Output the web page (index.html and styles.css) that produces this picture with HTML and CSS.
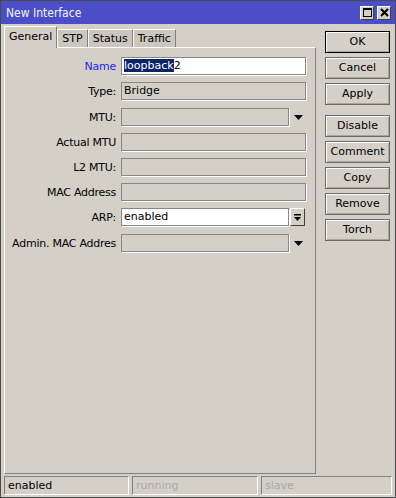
FILE: index.html
```html
<!DOCTYPE html>
<html>
<head>
<meta charset="utf-8">
<link rel="stylesheet" href="styles.css">
</head>
<body>
<div class="window">
  <div class="titlebar">
    <span class="title">New Interface</span>
    <div class="tb-buttons">
      <span class="tbb"><svg width="9" height="9" viewBox="0 0 9 9"><rect x="0.5" y="0.5" width="8" height="8" fill="none" stroke="#000"/><rect x="0" y="0" width="9" height="2" fill="#000"/></svg></span>
      <span class="tbb"><svg width="9" height="9" viewBox="0 0 9 9"><path d="M1 1 L8 8 M8 1 L1 8" stroke="#000" stroke-width="2"/></svg></span>
    </div>
  </div>
  <div class="main">
    <div class="left">
      <div class="tabs">
        <span class="tab active">General</span>
        <span class="tab">STP</span>
        <span class="tab">Status</span>
        <span class="tab">Traffic</span>
      </div>
      <div class="panel">
        <div class="form">
          <div class="row">
            <span class="label focus">Name</span>
            <span class="field white"><span class="sel">loopback</span>2</span>
          </div>
          <div class="row">
            <span class="label">Type:</span>
            <span class="field">Bridge</span>
          </div>
          <div class="row extra">
            <span class="label">MTU:</span>
            <span class="field short"></span>
            <span class="arrow"><svg width="9" height="5" viewBox="0 0 9 5"><path d="M0 0 H9 L4.5 5 Z" fill="#000"/></svg></span>
          </div>
          <div class="row">
            <span class="label">Actual MTU</span>
            <span class="field"></span>
          </div>
          <div class="row">
            <span class="label">L2 MTU:</span>
            <span class="field"></span>
          </div>
          <div class="row">
            <span class="label">MAC Address</span>
            <span class="field"></span>
          </div>
          <div class="row">
            <span class="label">ARP:</span>
            <span class="field short white">enabled</span>
            <span class="dd-btn"><svg width="7" height="7" viewBox="0 0 7 7"><rect x="0" y="0" width="7" height="1.5" fill="#000"/><path d="M0 3 H7 L3.5 7 Z" fill="#000"/></svg></span>
          </div>
          <div class="row extra">
            <span class="label">Admin. MAC Addres</span>
            <span class="field short"></span>
            <span class="arrow"><svg width="9" height="5" viewBox="0 0 9 5"><path d="M0 0 H9 L4.5 5 Z" fill="#000"/></svg></span>
          </div>
        </div>
      </div>
    </div>
    <div class="buttons">
      <span class="btn default">OK</span>
      <span class="btn">Cancel</span>
      <span class="btn">Apply</span>
      <span class="btn sep">Disable</span>
      <span class="btn">Comment</span>
      <span class="btn">Copy</span>
      <span class="btn">Remove</span>
      <span class="btn">Torch</span>
    </div>
  </div>
  <div class="status">
    <span class="sb sb1">enabled</span>
    <span class="sb sb2 dim">running</span>
    <span class="sb sb3 dim">slave</span>
  </div>
</div>
</body>
</html>
```

FILE: styles.css
```css
* { box-sizing: border-box; }
html, body { margin: 0; padding: 0; background: #d4d0c8; }
body {
  font-family: "DejaVu Sans", sans-serif;
  font-size: 11px;
  color: #000;
}
.window {
  width: 396px;
  height: 498px;
  border: 1px solid #4a4a4a;
  display: flex;
  flex-direction: column;
  background: #d4d0c8;
}
.titlebar {
  height: 23px;
  flex: none;
  background: #4a4fc7;
  color: #f2f2fa;
  display: flex;
  align-items: center;
  padding: 0 4px 0 5px;
}
.title {
  flex: 1;
  font-family: "DejaVu Sans Condensed", "DejaVu Sans", sans-serif;
  font-size: 12px;
}
.tb-buttons { display: flex; gap: 3px; }
.tbb {
  width: 14px;
  height: 14px;
  background: #d4d0c8;
  border: 1px solid;
  border-color: #fff #404040 #404040 #fff;
  display: flex;
  align-items: center;
  justify-content: center;
}
.main {
  height: 450px;
  flex: none;
  display: flex;
  padding-left: 3px;
}
.left {
  width: 312px;
  display: flex;
  flex-direction: column;
}
.tabs {
  height: 23px;
  flex: none;
  display: flex;
  align-items: flex-end;
}
.tab {
  height: 18px;
  padding: 0 4px;
  border-top: 1px solid #fff;
  border-left: 1px solid #fff;
  border-right: 1px solid #808080;
  background: #cbc7bf;
  line-height: 17px;
}
.tab.active {
  height: 22px;
  margin-bottom: -1px;
  padding: 0 4px;
  background: #d4d0c8;
  line-height: 20px;
  position: relative;
  z-index: 1;
}
.panel {
  flex: 1;
  border: 1px solid;
  border-color: #fff #808080 #808080 #fff;
  padding-top: 9px;
}
.form {
  display: flex;
  flex-direction: column;
  gap: 7px;
}
.row {
  display: flex;
  align-items: center;
  height: 18px;
}
.row.extra { margin-top: 1px; }
.label {
  width: 111px;
  margin-right: 5px;
  text-align: right;
  white-space: nowrap;
  letter-spacing: -0.25px;
}
.label.focus { color: #1c1cf0; }
.field {
  width: 185px;
  height: 18px;
  border: 1px solid #878787;
  box-shadow: 1px 1px 0 #fff;
  padding-left: 2px;
  line-height: 16px;
  white-space: nowrap;
  overflow: hidden;
}
.field.short { width: 168px; }
.field.white { background: #fff; }
.sel { background: #0a246a; color: #fff; }
.arrow {
  width: 17px;
  display: flex;
  justify-content: center;
  padding-left: 2px;
}
.dd-btn {
  width: 15px;
  height: 18px;
  margin-left: 1px;
  border: 1px solid;
  border-color: #fff #404040 #404040 #fff;
  display: flex;
  align-items: center;
  justify-content: center;
}
.buttons {
  width: 65px;
  margin-left: 9px;
  padding-top: 7px;
  display: flex;
  flex-direction: column;
  gap: 4px;
}
.btn {
  height: 22px;
  border: 1px solid #6b6b6b;
  box-shadow: inset 1px 1px 0 #fff, inset -1px -1px 0 #a9a59d;
  text-align: center;
  line-height: 20px;
}
.btn.default { border-color: #000; }
.btn.sep { margin-top: 6px; }
.status {
  flex: none;
  display: flex;
  gap: 3px;
  padding: 2px 0 0 3px;
}
.sb {
  height: 19px;
  border: 1px solid;
  border-color: #808080 #fff #fff #808080;
  padding-left: 3px;
  line-height: 17px;
}
.sb1 { width: 125px; }
.sb2 { width: 126px; }
.sb3 { width: 131px; }
.dim { color: #a8a8a8; }
```
